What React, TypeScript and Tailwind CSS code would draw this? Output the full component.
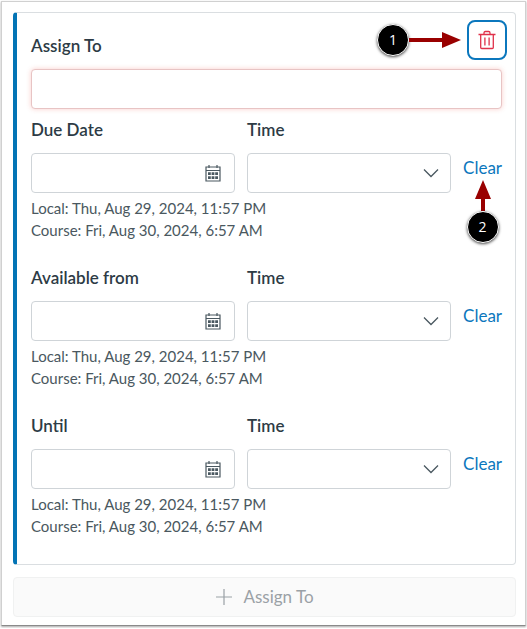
import React from 'react';

const LOCAL_TIME = 'Local: Thu, Aug 29, 2024, 11:57 PM';
const COURSE_TIME = 'Course: Fri, Aug 30, 2024, 6:57 AM';

const TrashIcon: React.FC = () => (
  <svg width="18" height="20" viewBox="0 0 18 20" fill="none" stroke="#e0314a" strokeWidth="1.3" aria-hidden="true">
    <path d="M.5 4.5h17M6 4.500V3q0-1.500 1.300-1.500h3.400q1.300 0 1.300 1.500v1.500M2.700 4.500v13q0 1 1 1h10.600q1 0 1-1v-13M6.900 7.500v8M11.100 7.500v8" />
  </svg>
);

const CalendarIcon: React.FC = () => (
  <svg width="16" height="17" viewBox="0 0 16 17" fill="none" stroke="#4a5860" aria-hidden="true">
    <path d="M1 2h14v14H1zM1 5.5h14" strokeWidth="1.2" />
    <path d="M4 0v3M12 0v3" strokeWidth="1.2" />
    <path d="M3 8.7h10M3 12.6h10" strokeWidth="2.800" strokeDasharray="2.800 .8" />
  </svg>
);

const ChevronIcon: React.FC = () => (
  <svg width="16" height="10" viewBox="0 0 16 10" fill="none" stroke="#4a5860" strokeWidth="1.3" aria-hidden="true">
    <path d="M1 1.5l7 7 7-7" />
  </svg>
);

const StepBadge: React.FC<{ step: number }> = ({ step }) => (
  <span className="flex h-8 w-8 shrink-0 items-center justify-center rounded-full border border-white bg-black font-['Open_Sans',sans-serif] text-sm text-white shadow-[0_1px_3px_rgba(0,0,0,0.7)]">
    {step}
  </span>
);

interface DateRowProps {
  id: string;
  label: string;
  step?: number;
}

const DateRow: React.FC<DateRowProps> = ({ id, label, step }) => (
  <div>
    <div className="flex gap-3">
      <div className="min-w-0 flex-1">
        <label htmlFor={`${id}-date`} className="mb-[9px] block text-[17px] leading-7 font-semibold">
          {label}
        </label>
        <div className="relative">
          <input
            id={`${id}-date`}
            type="text"
            className="block h-10 w-full rounded border border-[#cfd4d8] bg-white pr-10 pl-3"
          />
          <button type="button" aria-label={`Choose ${label}`} className="absolute inset-y-0 right-0 flex items-center pr-[14px]">
            <CalendarIcon />
          </button>
        </div>
      </div>
      <div className="min-w-0 flex-1">
        <label htmlFor={`${id}-time`} className="mb-[9px] block text-[17px] leading-7 font-semibold">
          Time
        </label>
        <div className="relative">
          <select
            id={`${id}-time`}
            className="block h-10 w-full appearance-none rounded border border-[#cfd4d8] bg-white pr-10 pl-3"
          />
          <span className="pointer-events-none absolute inset-y-0 right-0 flex items-center pr-3">
            <ChevronIcon />
          </span>
        </div>
      </div>
      <div className="relative mb-[13px] self-end">
        <button type="button" className="block text-[17px] leading-6 text-[#0b77bd]">
          Clear
        </button>
        {step && (
          <div className="absolute top-full left-1/2 flex -translate-x-1/2 flex-col items-center">
            <svg width="16" height="31" viewBox="0 0 16 31" fill="#990000" aria-hidden="true">
              <path d="M8 0l8 19h-6v12H6V19H0z" />
            </svg>
            <StepBadge step={step} />
          </div>
        )}
      </div>
    </div>
    <div className="mt-1 text-[15px] leading-[22px] text-[#4a5860]">
      <p>{LOCAL_TIME}</p>
      <p>{COURSE_TIME}</p>
    </div>
  </div>
);

const App: React.FC = () => {
  return (
    <div className="bg-white pt-px pr-px pb-[2px] pl-px font-[Lato,sans-serif] text-[#2d3b45]">
      <main className="border border-[#d0d0d0] border-b-[#8a8a8a] bg-white px-[11px] pt-[10px] pb-2 pr-[9px] shadow-[0_1px_2px_rgba(0,0,0,0.35)]">
        <section className="rounded border border-l-4 border-[#dadee1] border-l-[#0374b5] pt-[7px] pr-2 pb-[27px] pl-[14px]">
          <div className="flex items-end justify-between">
            <label htmlFor="assign-to" className="text-[17px] leading-7 font-semibold">
              Assign To
            </label>
            <div className="relative">
              <div className="absolute inset-y-0 right-full mr-[6px] flex items-center">
                <StepBadge step={1} />
                <svg width="52" height="16" viewBox="0 0 52 16" fill="#990000" aria-hidden="true">
                  <path d="M0 6h33V0l19 8-19 8v-6H0z" />
                </svg>
              </div>
              <button
                type="button"
                aria-label="Delete"
                className="flex h-10 w-10 items-center justify-center rounded-lg border-2 border-[#0b77bd] bg-white"
              >
                <TrashIcon />
              </button>
            </div>
          </div>
          <div className="mt-[9px] pr-[5px]">
            <input
              id="assign-to"
              type="text"
              className="block h-10 w-full rounded border border-[#e8c4c4] bg-white px-3 shadow-[0_0_5px_rgba(240,90,80,0.3)]"
            />
            <div className="mt-[7px] flex flex-col gap-[23px]">
              <DateRow id="due" label="Due Date" step={2} />
              <DateRow id="available" label="Available from" />
              <DateRow id="until" label="Until" />
            </div>
          </div>
        </section>
        <button
          type="button"
          disabled
          className="mt-3 flex h-10 w-full items-center justify-center gap-[10px] rounded border border-[#f0f1f1] bg-[#fafafa] text-[17px] text-[#9aa1a6]"
        >
          <svg width="18" height="18" viewBox="0 0 18 18" stroke="#9aa1a6" strokeWidth="1.2" aria-hidden="true">
            <path d="M9 1v16M1 9h16" />
          </svg>
          Assign To
        </button>
      </main>
    </div>
  );
};

export default App;
